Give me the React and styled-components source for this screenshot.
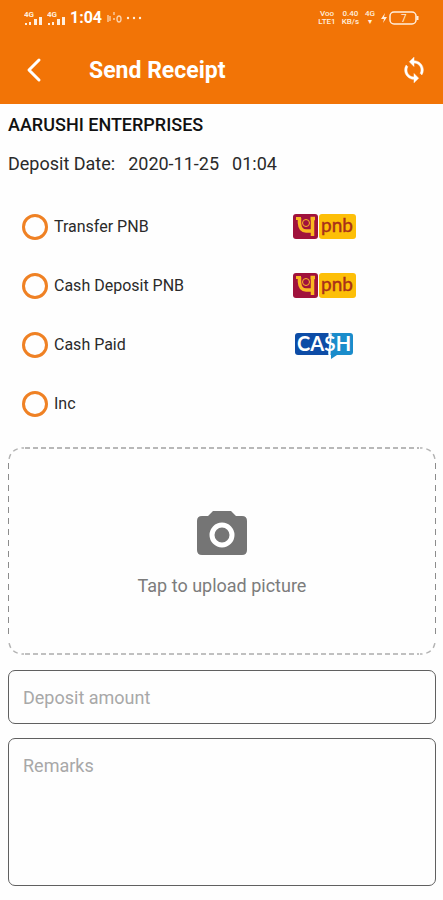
import React from "react";
import styled, { createGlobalStyle } from "styled-components";

const Global = createGlobalStyle`
  *, *::before, *::after { box-sizing: border-box; }
  body { margin: 0; background: #fefefe; color: #2a2a2a; font-family: Roboto, "Liberation Sans", sans-serif; }
  button, input, textarea { font: inherit; }
`;

const ORANGE = "#f27406";

const Screen = styled.div`
  display: flex;
  flex-direction: column;
  min-height: 100vh;
`;

const Header = styled.header`
  background: ${ORANGE};
  color: #fff;
`;

const StatusBar = styled.div`
  display: flex;
  align-items: center;
  justify-content: space-between;
  height: 36px;
  padding: 0 24px;
`;

const StatusGroup = styled.div`
  display: flex;
  align-items: center;
  gap: ${(p) => p.$gap}px;
  color: #ffeedd;
`;

const Clock = styled.time`
  color: #fff;
  font-size: 16px;
  font-weight: 700;
  line-height: 20px;
`;

const Stack = styled.div`
  display: flex;
  flex-direction: column;
  align-items: center;
  font-size: 8px;
  line-height: 8px;
  font-weight: 500;
`;

const TitleBar = styled.div`
  display: flex;
  align-items: center;
  height: 68px;
  padding: 0 11px 0 16px;
`;

const IconButton = styled.button`
  display: flex;
  padding: 4px;
  border: 0;
  background: none;
  color: #fff;
  cursor: pointer;
`;

const Title = styled.h1`
  flex: 1;
  margin: 2px 0 0 37px;
  font-size: 23px;
  line-height: 28px;
  font-weight: 700;
`;

const Main = styled.main`
  display: flex;
  flex-direction: column;
  padding: 10px 7px 14px 8px;
`;

const Company = styled.h2`
  margin: 0;
  color: #111;
  font-size: 18px;
  line-height: 22px;
  font-weight: 500;
`;

const DateLine = styled.div`
  display: flex;
  gap: 13px;
  margin: 17px 0 22px;
  font-size: 18px;
  line-height: 22px;
`;

const Options = styled.fieldset`
  display: flex;
  flex-direction: column;
  margin: 0;
  padding: 0 0 0 14px;
  border: 0;
`;

const Option = styled.label`
  display: grid;
  grid-template-columns: 26px 1fr 143px;
  align-items: center;
  column-gap: 6px;
  height: 59px;
  font-size: 16px;
  cursor: pointer;
`;

const Radio = styled.input`
  appearance: none;
  width: 26px;
  height: 26px;
  margin: 0;
  border: 3px solid #ef8124;
  border-radius: 50%;
  &:checked { background: radial-gradient(circle, #ef8124 6px, transparent 7px); }
`;

const Upload = styled.button`
  position: relative;
  display: flex;
  flex-direction: column;
  align-items: center;
  gap: 17px;
  height: 208px;
  margin: 14px 0 15px;
  padding: 62px 0 0;
  border: 0;
  background:
    repeating-linear-gradient(90deg, #b8b8b8 0 5px, transparent 5px 8px) 17px 0 / calc(100% - 34px) 2px no-repeat,
    repeating-linear-gradient(90deg, #c0c0c0 0 5px, transparent 5px 8px) 17px 100% / calc(100% - 34px) 2px no-repeat,
    repeating-linear-gradient(#8c8c8c 0 6px, transparent 6px 11px) 0 16px / 1px calc(100% - 32px) no-repeat,
    repeating-linear-gradient(#8c8c8c 0 6px, transparent 6px 11px) 100% 16px / 1px calc(100% - 32px) no-repeat;
  color: #7c7c7c;
  font-size: 18px;
  line-height: 24px;
  cursor: pointer;
`;

const CornerArc = styled.svg`
  position: absolute;
  ${(p) => (p.$bottom ? "bottom: 0;" : "top: 0;")}
  ${(p) => (p.$right ? "right: 0;" : "left: 0;")}
  transform: scale(${(p) => (p.$right ? -1 : 1)}, ${(p) => (p.$bottom ? -1 : 1)});
`;

const fieldStyle = `
  display: block;
  width: 100%;
  padding: 15px 14px 14px;
  border: 1px solid #606060;
  border-radius: 7px;
  background: transparent;
  color: #222;
  font-size: 18px;
  line-height: 24px;
  outline: none;
  resize: none;
  &::placeholder { color: #a8a8a8; opacity: 1; }
`;

const Amount = styled.input`${fieldStyle} height: 54px;`;
const Remarks = styled.textarea`${fieldStyle} height: 148px; margin-top: 14px;`;

const Signal = () => (
  <svg width="19" height="16" viewBox="0 0 19 16" fill="currentColor" role="img" aria-label="4G signal">
    <text x="0" y="7" fontSize="8" fontWeight="700" fontFamily="Roboto, sans-serif">4G</text>
    <rect x="1" y="13" width="2" height="2" />
    <rect x="5" y="12" width="2" height="3" />
    <rect x="10" y="9" width="3" height="6" />
    <rect x="15" y="7" width="3" height="8" />
  </svg>
);

const Corner = ({ right, bottom }) => (
  <CornerArc $right={right} $bottom={bottom} width="18" height="18" viewBox="0 0 18 18" aria-hidden="true">
    <path d="M0.700 16Q1 1 16 1" fill="none" stroke="#b4b4b4" strokeWidth="1.5" strokeDasharray="5 4" strokeDashoffset="-4" />
  </CornerArc>
);

const Pnb = () => (
  <svg width="64" height="27" viewBox="0 0 64 27" role="img" aria-label="pnb">
    <rect x="0" y="1" width="25" height="25" rx="3" fill="#a0123c" />
    <rect x="26" y="1" width="37" height="25" rx="3" fill="#fdbf08" />
    <g fill="none" stroke="#f9b822">
      <path d="M3 5.500H8" strokeWidth="3" />
      <path d="M6.500 5V10Q7 18 13 18H20" strokeWidth="3.500" />
      <path d="M17.500 5.500H22M19.500 5V23" strokeWidth="3.500" />
      <circle cx="13" cy="10" r="3.500" strokeWidth="1" />
    </g>
    <text x="28" y="19" fontSize="19" fill="#a8301a" stroke="#a8301a" strokeWidth=".4" fontFamily="Lato, sans-serif">pnb</text>
  </svg>
);

const Cash = () => (
  <svg width="64" height="32" viewBox="0 0 64 32" role="img" aria-label="CASH">
    <path d="M5 4H40V26H5Q2 26 2 23V7Q2 4 5 4Z" fill="#0d4ca6" />
    <path d="M38 4H57Q60 4 60 7V23Q60 26 57 26H44L38 30V26H35Z" fill="#1a8ccb" />
    <text x="4" y="22" fontSize="20" fontWeight="700" fill="#fff" fontFamily="Lato, sans-serif">CA$H</text>
    <path d="M36.500 3V7M36.500 22V27" stroke="#fff" strokeWidth="2" />
  </svg>
);

const OPTIONS = [
  { id: "transfer", label: "Transfer PNB", Logo: Pnb },
  { id: "deposit", label: "Cash Deposit PNB", Logo: Pnb },
  { id: "cash", label: "Cash Paid", Logo: Cash },
  { id: "inc", label: "Inc" },
];

export default function App() {
  return (
    <Screen>
      <Global />
      <Header>
        <StatusBar>
          <StatusGroup $gap={4}>
            <Signal />
            <Signal />
            <Clock>1:04</Clock>
            <svg width="16" height="14" viewBox="0 0 16 14" fill="none" stroke="currentColor" strokeWidth="1.4" opacity=".75">
              <path d="M2 4V11M4 5V10M7 8H9M8 1V4" />
              <ellipse cx="13" cy="8" rx="2" ry="3" />
            </svg>
            <svg width="16" height="4" viewBox="0 0 16 4" fill="currentColor">
              <circle cx="2" cy="2" r="1.2" />
              <circle cx="8" cy="2" r="1.2" />
              <circle cx="14" cy="2" r="1.2" />
            </svg>
          </StatusGroup>
          <StatusGroup $gap={6}>
            <Stack><span>Voo</span><span>LTE1</span></Stack>
            <Stack><span>0.40</span><span>KB/s</span></Stack>
            <Stack><span>4G</span><span>▾</span></Stack>
            <svg width="38" height="16" viewBox="0 0 38 16" fill="none" stroke="currentColor" role="img" aria-label="Battery 7%">
              <path d="M4 3L0 9H3L2 13L6 7H3Z" fill="currentColor" stroke="none" />
              <rect x="9" y="2" width="26" height="12" rx="4" strokeWidth="1.5" />
              <path d="M36.500 6V10" strokeWidth="2" />
              <text x="20" y="12" fontSize="10" fill="currentColor" stroke="none" fontFamily="Roboto, sans-serif">7</text>
            </svg>
          </StatusGroup>
        </StatusBar>
        <TitleBar>
          <IconButton type="button" aria-label="Back">
            <svg width="28" height="28" viewBox="0 0 28 28" fill="none" stroke="currentColor" strokeWidth="3" strokeLinecap="round" strokeLinejoin="round">
              <path d="M19 4L9 14L19 24" />
            </svg>
          </IconButton>
          <Title>Send Receipt</Title>
          <IconButton type="button" aria-label="Refresh">
            <svg width="28" height="28" viewBox="0 0 24 24" fill="currentColor" stroke="currentColor" strokeWidth=".4">
              <path d="M12 4V1L8 5l4 4V6c3.310 0 6 2.690 6 6 0 1.010-.25 1.970-.7 2.800l1.460 1.460C19.540 15.030 20 13.570 20 12c0-4.420-3.580-8-8-8zm0 14c-3.310 0-6-2.690-6-6 0-1.010.25-1.970.7-2.800L5.240 7.740C4.460 8.970 4 10.430 4 12c0 4.420 3.580 8 8 8v3l4-4-4-4v3z" />
            </svg>
          </IconButton>
        </TitleBar>
      </Header>
      <Main>
        <Company>AARUSHI ENTERPRISES</Company>
        <DateLine>
          <span>Deposit Date:</span>
          <span>2020-11-25</span>
          <span>01:04</span>
        </DateLine>
        <Options aria-label="Payment method">
          {OPTIONS.map(({ id, label, Logo }) => (
            <Option key={id}>
              <Radio type="radio" name="method" value={id} />
              <span>{label}</span>
              {Logo && <Logo />}
            </Option>
          ))}
        </Options>
        <Upload type="button">
          <Corner />
          <Corner right />
          <Corner bottom />
          <Corner right bottom />
          <svg width="52" height="48" viewBox="0 0 52 48">
            <path d="M17 2H35L40 7H46Q51 7 51 12V41Q51 46 46 46H6Q1 46 1 41V12Q1 7 6 7H12Z" fill="#757575" />
            <circle cx="26" cy="26" r="10" fill="none" stroke="#fff" strokeWidth="5" />
          </svg>
          <span>Tap to upload picture</span>
        </Upload>
        <Amount type="text" placeholder="Deposit amount" aria-label="Deposit amount" />
        <Remarks placeholder="Remarks" aria-label="Remarks" />
      </Main>
    </Screen>
  );
}
